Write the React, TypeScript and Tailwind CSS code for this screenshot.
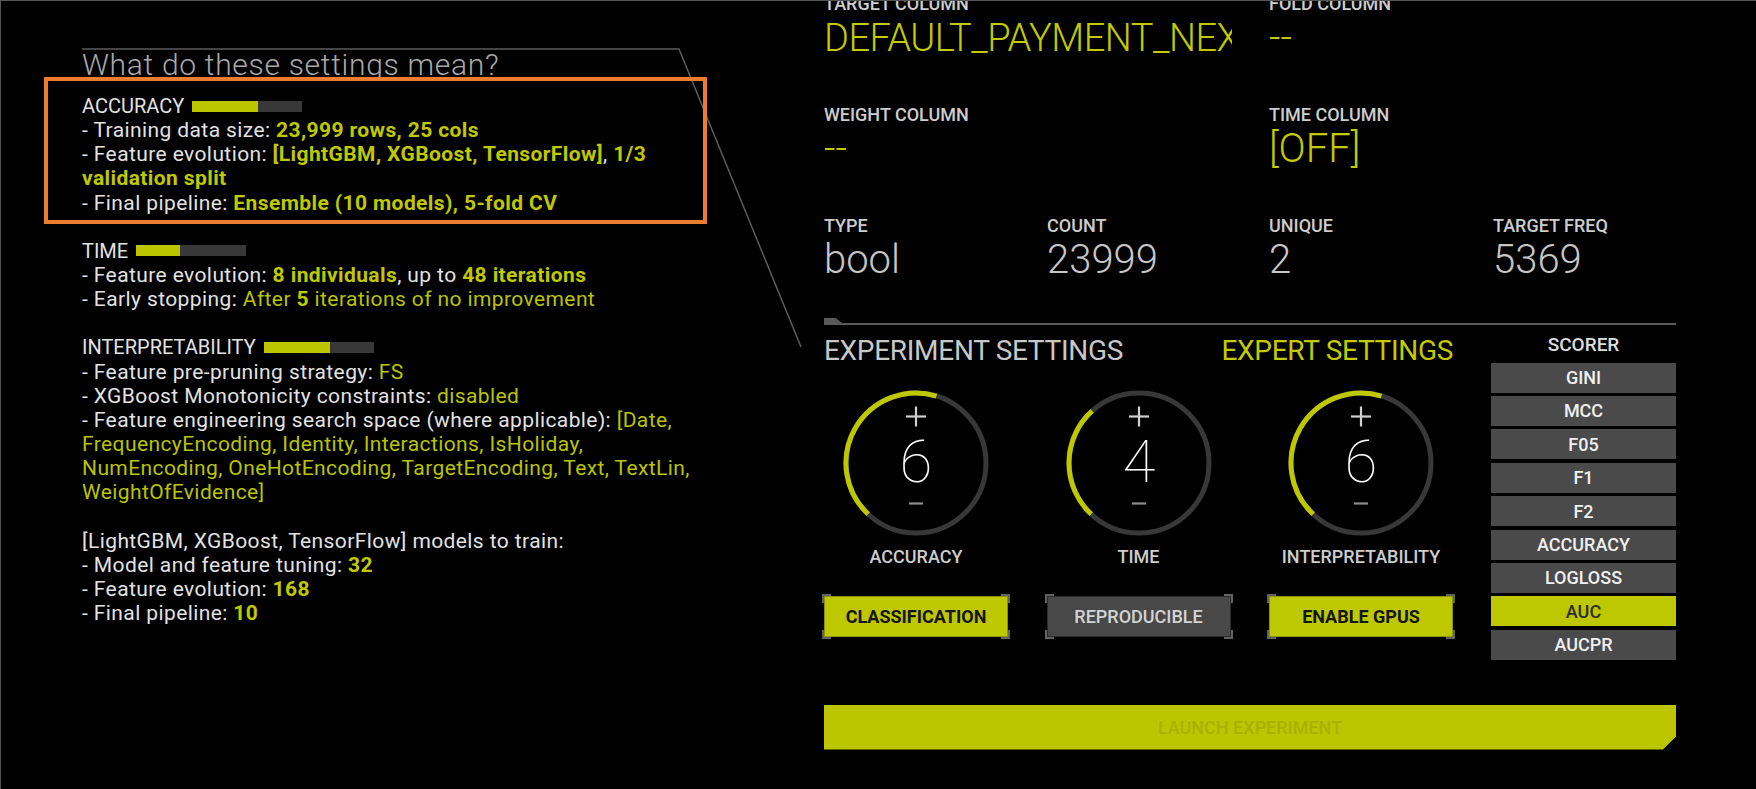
import React from "react";

const B = ({ children }: { children: React.ReactNode }) => (
  <span className="font-bold text-[#c0c900]">{children}</span>
);
const Yn = ({ children }: { children: React.ReactNode }) => (
  <span className="text-[#bac300]">{children}</span>
);
const L = ({ children }: { children?: React.ReactNode }) => (
  <div className="h-[24.15px] whitespace-nowrap text-[21px] leading-[24px] tracking-[0.4px]">{children}</div>
);

function Bar({ pct }: { pct: number }) {
  return (
    <span className="ml-2 flex h-[11px] w-[110px] bg-[#383838]">
      <span className="h-full bg-[#bcc600]" style={{ width: `${pct}%` }} />
    </span>
  );
}

function BarLine({ label, pct }: { label: string; pct: number }) {
  return (
    <div className="flex h-[24.15px] items-center whitespace-nowrap text-[20px] leading-[24px]">
      <span>{label}</span>
      <Bar pct={pct} />
    </div>
  );
}

function Field({
  label,
  value,
  yellow,
  clip,
}: {
  label: string;
  value: string;
  yellow?: boolean;
  clip?: boolean;
}) {
  return (
    <div>
      <div className="text-[18px] font-medium leading-[20px] text-[#cdcdcd]">{label}</div>
      <div
        className={
          yellow
            ? clip
              ? "mt-[1.5px] w-[408px] overflow-hidden whitespace-nowrap text-[38px] font-light leading-[44px] tracking-[-0.5px] text-[#c3cb00]"
              : "mt-[1.5px] whitespace-nowrap text-[40px] font-light leading-[44px] text-[#c3cb00]"
            : "mt-[1.5px] whitespace-nowrap text-[40px] font-light leading-[44px] text-[#c6c6c6]"
        }
      >
        {value}
      </div>
    </div>
  );
}

function Dial({ value, sweep, label }: { value: number; sweep: number; label: string }) {
  const r = 70;
  const pt = (deg: number) => {
    const a = (deg * Math.PI) / 180;
    return [75 + r * Math.sin(a), 75 - r * Math.cos(a)];
  };
  const startDeg = 223;
  const [x1, y1] = pt(startDeg);
  const [x2, y2] = pt(startDeg + sweep);
  const large = sweep > 180 ? 1 : 0;
  return (
    <div className="flex flex-col items-center">
      <svg width="150" height="150" viewBox="0 0 150 150">
        <circle cx="75" cy="75" r={r} fill="none" stroke="#383838" strokeWidth="5" />
        <path
          d={`M ${x1} ${y1} A ${r} ${r} 0 ${large} 1 ${x2} ${y2}`}
          fill="none"
          stroke="#bdc800"
          strokeWidth="5"
        />
        <line x1="65" y1="28.5" x2="85" y2="28.5" stroke="#d0d0d0" strokeWidth="2.2" />
        <line x1="75" y1="18.5" x2="75" y2="38.5" stroke="#d0d0d0" strokeWidth="2.2" />
        <line x1="68" y1="115.5" x2="82" y2="115.5" stroke="#8c8c8c" strokeWidth="2.2" />
        <text
          x="75"
          y="93.5"
          textAnchor="middle"
          fontFamily="Roboto, sans-serif"
          fontWeight={100}
          fontSize="60"
          fill="#ffffff"
        >
          {value}
        </text>
      </svg>
      <div className="mt-[8.4px] text-[18px] font-medium leading-[20px] text-[#cdcdcd]">{label}</div>
    </div>
  );
}

function Corners() {
  return (
    <>
      <span className="absolute -left-[2px] -top-[2px] h-[9px] w-[9px] border-l-2 border-t-2 border-[#626262]" />
      <span className="absolute -right-[2px] -top-[2px] h-[9px] w-[9px] border-r-2 border-t-2 border-[#626262]" />
      <span className="absolute -bottom-[2px] -left-[2px] h-[9px] w-[9px] border-b-2 border-l-2 border-[#626262]" />
      <span className="absolute -bottom-[2px] -right-[2px] h-[9px] w-[9px] border-b-2 border-r-2 border-[#626262]" />
    </>
  );
}

function Btn({ label, active }: { label: string; active?: boolean }) {
  return (
    <div className="relative mt-[29px] h-[41px] w-[184px]">
      <div
        className={
          active
            ? "flex h-full w-full items-center justify-center border border-[#8c9400] bg-[#bdc800] text-[18px] font-bold text-[#151515]"
            : "flex h-full w-full items-center justify-center border border-[#2c2c2c] bg-[#484848] text-[18px] font-medium text-[#d4d4d4]"
        }
      >
        {label}
      </div>
      <Corners />
    </div>
  );
}

const scorers = ["GINI", "MCC", "F05", "F1", "F2", "ACCURACY", "LOGLOSS", "AUC", "AUCPR"];

export default function App() {
  return (
    <div className="relative flex h-[789px] w-[1756px] overflow-hidden border-l border-t border-[#555555] bg-black font-['Roboto',sans-serif] text-[#e2e2e2]">
      {/* Left: explanation */}
      <div className="w-[823px] shrink-0 pl-[81px] pt-[48px]">
        <h1 className="whitespace-nowrap text-[30px] font-light leading-[32px] tracking-[0.7px] text-[#a8a8a8]">
          What do these settings mean?
        </h1>
        <div className="mt-[13px]">
          <BarLine label="ACCURACY" pct={60} />
          <L>
            - Training data size: <B>23,999 rows, 25 cols</B>
          </L>
          <L>
            - Feature evolution: <B>[LightGBM, XGBoost, TensorFlow]</B>, <B>1/3</B>
          </L>
          <L>
            <B>validation split</B>
          </L>
          <L>
            - Final pipeline: <B>Ensemble (10 models), 5-fold CV</B>
          </L>
          <L />
          <BarLine label="TIME" pct={40} />
          <L>
            - Feature evolution: <B>8 individuals</B>, up to <B>48 iterations</B>
          </L>
          <L>
            - Early stopping: <Yn>After </Yn>
            <B>5</B>
            <Yn> iterations of no improvement</Yn>
          </L>
          <L />
          <BarLine label="INTERPRETABILITY" pct={60} />
          <L>
            - Feature pre-pruning strategy: <Yn>FS</Yn>
          </L>
          <L>
            - XGBoost Monotonicity constraints: <Yn>disabled</Yn>
          </L>
          <L>
            - Feature engineering search space (where applicable): <Yn>[Date,</Yn>
          </L>
          <L>
            <Yn>FrequencyEncoding, Identity, Interactions, IsHoliday,</Yn>
          </L>
          <L>
            <Yn>NumEncoding, OneHotEncoding, TargetEncoding, Text, TextLin,</Yn>
          </L>
          <L>
            <Yn>WeightOfEvidence]</Yn>
          </L>
          <L />
          <L>[LightGBM, XGBoost, TensorFlow] models to train:</L>
          <L>
            - Model and feature tuning: <B>32</B>
          </L>
          <L>
            - Feature evolution: <B>168</B>
          </L>
          <L>
            - Final pipeline: <B>10</B>
          </L>
        </div>
      </div>

      {/* Right: experiment setup */}
      <div className="mt-[-7px] w-[852px] shrink-0">
        <div className="grid grid-cols-[445px_407px]">
          <Field label="TARGET COLUMN" value="DEFAULT_PAYMENT_NEXT_MONTH" yellow clip />
          <Field label="FOLD COLUMN" value="--" yellow />
        </div>
        <div className="mt-[45.5px] grid grid-cols-[445px_407px]">
          <Field label="WEIGHT COLUMN" value="--" yellow />
          <Field label="TIME COLUMN" value="[OFF]" yellow />
        </div>
        <div className="mt-[45.5px] grid grid-cols-[223px_222px_224px_183px]">
          <Field label="TYPE" value="bool" />
          <Field label="COUNT" value="23999" />
          <Field label="UNIQUE" value="2" />
          <Field label="TARGET FREQ" value="5369" />
        </div>

        <div className="mt-[36.6px] h-[5px] w-[18px] bg-[#5a5a5a] [clip-path:polygon(0_0,65%_0,100%_100%,0_100%)]" />
        <div className="h-[2px] w-full bg-[#5a5a5a]" />

        <div className="mt-[8px] flex items-start gap-[38px]">
          <div className="w-[629px]">
            <div className="mt-[2.4px] flex items-center justify-between whitespace-nowrap text-[28px] leading-[32px] tracking-[-0.3px]">
              <span className="text-[#c8c8c8]">EXPERIMENT SETTINGS</span>
              <span className="text-[#c3cb00]">EXPERT SETTINGS</span>
            </div>
            <div className="mt-[21px] grid grid-cols-[184px_184px_184px] gap-x-[38.5px]">
              <div className="flex flex-col items-center">
                <Dial value={6} sweep={154} label="ACCURACY" />
                <Btn label="CLASSIFICATION" active />
              </div>
              <div className="flex flex-col items-center">
                <Dial value={4} sweep={95} label="TIME" />
                <Btn label="REPRODUCIBLE" />
              </div>
              <div className="flex flex-col items-center">
                <Dial value={6} sweep={154} label="INTERPRETABILITY" />
                <Btn label="ENABLE GPUS" active />
              </div>
            </div>
          </div>

          <div className="mt-[0.5px] w-[185px]">
            <div className="text-center text-[19px] font-medium leading-[22px] text-[#dedede]">SCORER</div>
            <div className="mt-[7px] flex flex-col gap-[3.4px]">
              {scorers.map((s) =>
                s === "AUC" ? (
                  <div
                    key={s}
                    className="flex h-[30px] items-center justify-center bg-[#bdc800] text-[18px] font-medium text-[#2e2e2e]"
                  >
                    {s}
                  </div>
                ) : (
                  <div
                    key={s}
                    className="flex h-[30px] items-center justify-center bg-[#4a4a4a] text-[18px] font-medium text-[#f0f0f0]"
                  >
                    {s}
                  </div>
                )
              )}
            </div>
          </div>
        </div>

        <div className="mt-[44.8px] flex h-[45px] w-[852px] items-center justify-center bg-[#bcc600] text-[18px] font-medium text-[#a9b200] [clip-path:polygon(0_0,852px_0,852px_32px,839px_45px,0_45px)]">
          LAUNCH EXPERIMENT
        </div>
      </div>

      {/* Connector line from the help panel to the settings */}
      <svg
        className="pointer-events-none absolute left-0 top-0"
        width="1756"
        height="789"
        viewBox="0 0 1756 789"
      >
        <polyline points="81,48 678,48 800,346" fill="none" stroke="#5c5c5c" strokeWidth="1.5" />
      </svg>

      {/* Highlight annotation */}
      <div className="pointer-events-none absolute left-[43px] top-[76px] h-[147px] w-[663px] border-4 border-[#ec7c2f]" />
    </div>
  );
}
